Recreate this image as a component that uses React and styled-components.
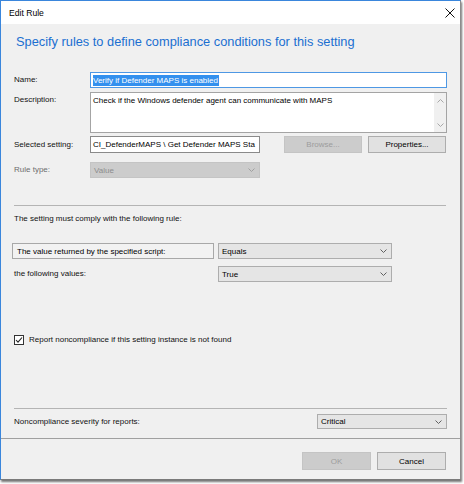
import React from "react";
import styled, { createGlobalStyle } from "styled-components";

const GlobalStyle = createGlobalStyle`
  html, body { margin: 0; padding: 0; background: #ffffff; }
  body { font-family: "Liberation Sans", Arial, sans-serif; font-size: 8px; color: #000; }
  * { box-sizing: border-box; }
`;

const Frame = styled.div`
  width: 464px;
  height: 484px;
  background: #ffffff;
`;

const Window = styled.div`
  width: 461px;
  height: 480px;
  border: 1px solid;
  border-color: #3a86dc #8c8c8c #7a7a7a #3a86dc;
  box-shadow: 1px 2px 2px rgba(0, 0, 0, 0.55);
  background: #f0f0f0;
  display: flex;
  flex-direction: column;
`;

const TitleBar = styled.div`
  height: 23px;
  background: #ffffff;
  display: flex;
  align-items: center;
  justify-content: space-between;
  padding: 0 5px 0 8px;
  font-size: 8.6px;
  color: #000;
`;

const Header = styled.div`
  margin: 10px 0 0 15px;
  font-size: 12.8px;
  line-height: 15px;
  color: #1b6fd0;
`;

const Body = styled.div`
  display: flex;
  flex-direction: column;
  padding: 0 13px;
`;

const Row = styled.div`
  display: flex;
  align-items: ${(p) => p.$align || "center"};
  margin-top: ${(p) => p.$top || 0}px;
  gap: ${(p) => p.$gap || 0}px;
`;

const Label = styled.div`
  width: ${(p) => p.$w || 76}px;
  flex: none;
  font-size: 8px;
  line-height: 10px;
  padding-top: ${(p) => p.$pt || 0}px;
  color: ${(p) => (p.$disabled ? "#6d6d6d" : "#111")};
`;

const Text = styled.div`
  font-size: 8px;
  line-height: 10px;
  color: #111;
  margin-top: ${(p) => p.$top || 0}px;
`;

const Input = styled.div`
  width: ${(p) => (p.$w ? `${p.$w}px` : "auto")};
  flex: ${(p) => (p.$w ? "none" : "1")};
  height: ${(p) => p.$h || 16}px;
  background: #ffffff;
  border: 1px solid ${(p) => (p.$focus ? "#4e98e4" : "#8a8a8a")};
  font-size: 8px;
  padding: 0 1px 0 2px;
  white-space: nowrap;
  overflow: hidden;
  display: flex;
  align-items: center;
`;

const Selected = styled.span`
  background: #3390ee;
  color: #ffffff;
  line-height: 11px;
  padding: 0 1px 0 0;
`;

const TextArea = styled.div`
  flex: 1;
  height: 41px;
  background: #ffffff;
  border: 1px solid #a4a4a4;
  display: flex;
  font-size: 8px;
  line-height: 10px;
`;

const AreaText = styled.div`
  flex: 1;
  padding: 3px 2px;
`;

const ScrollBar = styled.div`
  width: 12px;
  background: #f0f0f0;
  display: flex;
  flex-direction: column;
  justify-content: space-between;
  align-items: center;
  padding: 6px 0 5px;
`;

const Button = styled.div`
  width: ${(p) => p.$w || 78}px;
  height: ${(p) => p.$h || 17}px;
  flex: none;
  display: flex;
  align-items: center;
  justify-content: center;
  font-size: 8px;
  background: ${(p) => (p.$disabled ? "#cccccc" : "#e1e1e1")};
  border: 1px solid ${(p) => (p.$disabled ? "#c4c4c4" : "#adadad")};
  color: ${(p) => (p.$disabled ? "#9c9c9c" : "#000")};
`;

const Select = styled.div`
  width: ${(p) => p.$w}px;
  height: ${(p) => p.$h || 16}px;
  flex: none;
  display: flex;
  align-items: center;
  justify-content: space-between;
  padding: 0 4px 0 3px;
  font-size: 8px;
  background: ${(p) => (p.$disabled ? "#cccccc" : "#e5e5e5")};
  border: 1px solid ${(p) => (p.$disabled ? "#c4c4c4" : "#adadad")};
  color: ${(p) => (p.$disabled ? "#8d8d8d" : "#000")};
`;

const BoxLabel = styled.div`
  width: 202px;
  height: 16px;
  flex: none;
  margin-left: -2px;
  border: 1px solid #a8a8a8;
  background: #f2f2f2;
  display: flex;
  align-items: center;
  padding-left: 4px;
  font-size: 8px;
`;

const Separator = styled.div`
  height: 1px;
  background: #b4b4b4;
  margin-top: ${(p) => p.$top || 0}px;
  margin-right: ${(p) => p.$right || 0}px;
`;

const FullLine = styled.div`
  height: 1px;
  background: #a0a0a0;
  margin-top: ${(p) => p.$top || 0}px;
`;

const CheckBox = styled.div`
  width: 10px;
  height: 10px;
  flex: none;
  border: 1px solid #333333;
  background: #ffffff;
  display: flex;
  align-items: center;
  justify-content: center;
`;

const Footer = styled.div`
  display: flex;
  justify-content: flex-end;
  gap: 6px;
  padding: 13px 14px 0 0;
`;

const Spacer = styled.div`
  flex: 1;
`;

const ButtonGroup = styled.div`
  display: flex;
  gap: 6px;
  margin-right: 1px;
`;

const Chevron = ({ up, color = "#606060" }) => (
  <svg width="7" height="4" viewBox="0 0 7 4">
    <polyline
      points={up ? "0.5,3.5 3.5,0.5 6.5,3.5" : "0.5,0.5 3.5,3.5 6.5,0.5"}
      fill="none"
      stroke={color}
      strokeWidth="1"
    />
  </svg>
);

const CloseIcon = () => (
  <svg width="10" height="10" viewBox="0 0 10 10">
    <path d="M0.5 0.5 L9.5 9.5 M9.5 0.5 L0.5 9.5" stroke="#111" strokeWidth="1" />
  </svg>
);

export default function App() {
  return (
    <>
      <GlobalStyle />
      <Frame>
        <Window>
          <TitleBar>
            <span>Edit Rule</span>
            <CloseIcon />
          </TitleBar>
          <Header>Specify rules to define compliance conditions for this setting</Header>
          <Body>
            <Row $top={23}>
              <Label>Name:</Label>
              <Input $focus>
                <Selected>Verify if Defender MAPS is enabled</Selected>
              </Input>
            </Row>
            <Row $top={4} $align="flex-start">
              <Label $pt={3}>Description:</Label>
              <TextArea>
                <AreaText>Check if the Windows defender agent can communicate with MAPS</AreaText>
                <ScrollBar>
                  <Chevron up color="#a8a8a8" />
                  <Chevron color="#a8a8a8" />
                </ScrollBar>
              </TextArea>
            </Row>
            <Row $top={3}>
              <Label>Selected setting:</Label>
              <Input $w={170} $h={17}>CI_DefenderMAPS \ Get Defender MAPS Sta</Input>
              <Spacer />
              <ButtonGroup>
                <Button $disabled>Browse...</Button>
                <Button>Properties...</Button>
              </ButtonGroup>
            </Row>
            <Row $top={9}>
              <Label $disabled>Rule type:</Label>
              <Select $w={170} $disabled>
                <span>Value</span>
                <Chevron color="#a0a0a0" />
              </Select>
            </Row>
            <Separator $top={27} $right={1} />
            <Text $top={8}>The setting must comply with the following rule:</Text>
            <Row $top={19} $gap={4}>
              <BoxLabel>The value returned by the specified script:</BoxLabel>
              <Select $w={174}>
                <span>Equals</span>
                <Chevron />
              </Select>
            </Row>
            <Row $top={7}>
              <Label $w={204}>the following values:</Label>
              <Select $w={174}>
                <span>True</span>
                <Chevron />
              </Select>
            </Row>
            <Row $top={53} $gap={5}>
              <CheckBox>
                <svg width="8" height="8" viewBox="0 0 8 8">
                  <polyline points="1,4 3,6.2 7,1.5" fill="none" stroke="#222" strokeWidth="1.1" />
                </svg>
              </CheckBox>
              <Text>Report noncompliance if this setting instance is not found</Text>
            </Row>
            <Separator $top={63} />
            <Row $top={5}>
              <Label $w={303}>Noncompliance severity for reports:</Label>
              <Select $w={130} $h={15}>
                <span>Critical</span>
                <Chevron />
              </Select>
            </Row>
          </Body>
          <FullLine $top={9} />
          <Footer>
            <Button $w={69} $h={18} $disabled>OK</Button>
            <Button $w={69} $h={18}>Cancel</Button>
          </Footer>
        </Window>
      </Frame>
    </>
  );
}
